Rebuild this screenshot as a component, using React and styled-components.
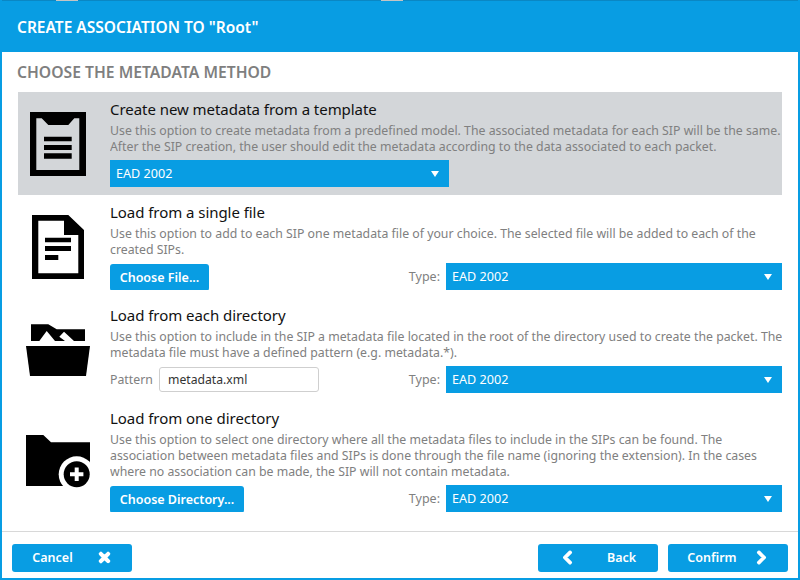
import React from 'react';
import styled, { createGlobalStyle } from 'styled-components';
import { FaChevronLeft, FaChevronRight, FaTimes } from 'react-icons/fa';

const BLUE = '#089de3';

const GlobalStyle = createGlobalStyle`
    html, body {
        margin: 0;
        padding: 0;
        background: #fff;
    }
    body {
        font-family: "Noto Sans", "Open Sans", sans-serif;
    }
`;

const Dialog = styled.div`
    width: 800px;
    height: 580px;
    box-sizing: border-box;
    display: flex;
    flex-direction: column;
    background: #fff;
    border-style: solid;
    border-color: ${BLUE};
    border-width: 0 2px 2px 2px;
    overflow: hidden;
`;

// what little of the window behind shows above the dialog
const TopEdge = styled.div`
    height: 1px;
    flex: none;
    margin: 0 -2px;
    background: linear-gradient(
        to right,
        #0a87c4 56px,
        #c4c4c4 56px,
        #c4c4c4 78px,
        #0a87c4 78px,
        #0a87c4 381px,
        #c4c4c4 381px,
        #c4c4c4 403px,
        #0a87c4 403px
    );
`;

const Header = styled.div`
    height: 51px;
    flex: none;
    box-sizing: border-box;
    margin: 0 -2px;
    padding: 1px 0 0 17px;
    display: flex;
    align-items: center;
    background: ${BLUE};
    color: #fff;
    font-size: 15.5px;
    font-weight: 600;
`;

const Heading = styled.div`
    height: 40px;
    padding-left: 15px;
    display: flex;
    align-items: center;
    color: #7f7f7f;
    font-size: 15.7px;
    font-weight: 600;
`;

const Methods = styled.div`
    margin: 0 16px;
`;

const Method = styled.div`
    display: flex;
    align-items: center;
    padding: 8px 0;
    background: ${props => (props.$active ? '#d3d6d9' : 'transparent')};
`;

const IconSlot = styled.div`
    width: 92px;
    flex: none;
    padding-left: 8px;
    box-sizing: border-box;
    display: flex;
`;

const Body = styled.div`
    flex: 1;
    min-width: 0;
    overflow: hidden;
`;

const Title = styled.div`
    height: 18px;
    line-height: 18px;
    margin-bottom: 5px;
    color: #111;
    font-size: 15px;
    letter-spacing: -0.05px;
    white-space: nowrap;
`;

const Description = styled.div`
    margin-bottom: 5px;
    color: #808080;
    font-size: 12.3px;
    line-height: 16px;
    white-space: nowrap;
`;

const Controls = styled.div`
    height: 27px;
    display: flex;
    align-items: center;
`;

const Select = styled.div`
    width: ${props => props.$width}px;
    height: 27px;
    flex: none;
    box-sizing: border-box;
    padding: 0 10px 0 6px;
    display: flex;
    align-items: center;
    justify-content: space-between;
    background: ${BLUE};
    color: #fff;
    font-size: 12.6px;

    &::after {
        content: '';
        border-style: solid;
        border-width: 6px 4.5px 0 4.5px;
        border-color: #fff transparent transparent transparent;
    }
`;

const Action = styled.button`
    height: 27px;
    margin-top: 2px;
    padding: 0 9.5px;
    min-width: ${props => props.$minWidth || 0}px;
    border: none;
    border-radius: 3px;
    background: ${BLUE};
    color: #fff;
    font-family: inherit;
    font-size: 12.5px;
    font-weight: 600;
`;

const PatternLabel = styled.span`
    width: 49px;
    color: #808080;
    font-size: 12.3px;
`;

const PatternInput = styled.input`
    width: 160px;
    height: 25px;
    box-sizing: border-box;
    padding: 0 8px;
    border: 1px solid #cfcfcf;
    border-radius: 3px;
    background: #fff;
    color: #333;
    font-family: inherit;
    font-size: 12.2px;
    outline: none;
`;

const TypeLabel = styled.span`
    margin-left: auto;
    margin-right: 6px;
    color: #808080;
    font-size: 12.5px;
`;

const Footer = styled.div`
    margin-top: auto;
    height: 47px;
    flex: none;
    box-sizing: border-box;
    padding: 12px 10px 6px 10px;
    display: flex;
    gap: 10px;
    border-top: 1px solid #d8d8d8;
`;

const FooterButton = styled.button`
    width: 120px;
    height: 28px;
    padding: 0 0 2px;
    border: none;
    border-radius: 3px;
    display: flex;
    align-items: center;
    justify-content: center;
    gap: ${props => props.$gap}px;
    background: ${BLUE};
    color: #fff;
    font-family: inherit;
    font-size: 12.5px;
    font-weight: 600;
    &:first-child {
        margin-right: auto;
    }
    svg {
        font-size: 15px;
        stroke: currentColor;
        stroke-width: 45;
    }
`;

const TemplateIcon = () => (
    <svg width="64" height="64" viewBox="0 0 64 64">
        <path
            fillRule="evenodd"
            d="M4 0H60V64H4ZM10.3 6.3V58H53.3V6.3H48.3L42.3 13H22.3L15.7 6.3Z"
        />
        <path d="M18 24.7H45.7V29.3H18ZM18 33H45.7V38H18ZM18 41.3H45.7V46.7H18Z" />
    </svg>
);

const FileIcon = () => (
    <svg width="64" height="64" viewBox="0 0 64 64">
        <path
            fillRule="evenodd"
            d="M6 0H42.3L58 15V64H6ZM12.3 5.7V58.3H52.3V20H38V5.7Z"
        />
        <path d="M19 22.7H45V27.3H19ZM19 31H45V36H19ZM19 40H32.3V45H19Z" />
    </svg>
);

const OpenFolderIcon = () => (
    <svg width="64" height="64" viewBox="0 0 64 64">
        <path d="M5 6.3H22.3L30.7 11.3H59V23H48L38 13.7L33.3 18.7L39 23H29L20.7 13L13.3 23H5Z" />
        <path d="M0 28H64L60 58H4Z" />
    </svg>
);

const AddFolderIcon = () => (
    <svg width="64" height="64" viewBox="0 0 64 64">
        <path d="M0 6H17.3L25 13.3H64V57H0Z" />
        <circle cx="50.7" cy="45.3" r="18" fill="#fff" />
        <circle cx="50.7" cy="45.3" r="13" />
        <path fill="#fff" d="M48.7 38.6H52.7V43.3H57.4V47.3H52.7V52H48.7V47.3H44V43.3H48.7Z" />
    </svg>
);

const App = () => (
    <Dialog>
        <GlobalStyle />
        <TopEdge />
        <Header>CREATE ASSOCIATION TO "Root"</Header>
        <Heading>CHOOSE THE METADATA METHOD</Heading>
        <Methods>
            <Method $active>
                <IconSlot><TemplateIcon /></IconSlot>
                <Body>
                    <Title>Create new metadata from a template</Title>
                    <Description>
                        Use this option to create metadata from a predefined model. The associated metadata for each SIP will be the same.<br />
                        After the SIP creation, the user should edit the metadata according to the data associated to each packet.
                    </Description>
                    <Controls><Select $width={339}>EAD 2002</Select></Controls>
                </Body>
            </Method>
            <Method>
                <IconSlot><FileIcon /></IconSlot>
                <Body>
                    <Title>Load from a single file</Title>
                    <Description>
                        Use this option to add to each SIP one metadata file of your choice. The selected file will be added to each of the<br />
                        created SIPs.
                    </Description>
                    <Controls>
                        <Action $minWidth={99}>Choose File...</Action>
                        <TypeLabel>Type:</TypeLabel>
                        <Select $width={336}>EAD 2002</Select>
                    </Controls>
                </Body>
            </Method>
            <Method>
                <IconSlot><OpenFolderIcon /></IconSlot>
                <Body>
                    <Title>Load from each directory</Title>
                    <Description>
                        Use this option to include in the SIP a metadata file located in the root of the directory used to create the packet. The<br />
                        metadata file must have a defined pattern (e.g. metadata.*).
                    </Description>
                    <Controls>
                        <PatternLabel>Pattern</PatternLabel>
                        <PatternInput defaultValue="metadata.xml" />
                        <TypeLabel>Type:</TypeLabel>
                        <Select $width={336}>EAD 2002</Select>
                    </Controls>
                </Body>
            </Method>
            <Method>
                <IconSlot><AddFolderIcon /></IconSlot>
                <Body>
                    <Title>Load from one directory</Title>
                    <Description>
                        Use this option to select one directory where all the metadata files to include in the SIPs can be found. The<br />
                        association between metadata files and SIPs is done through the file name (ignoring the extension). In the cases<br />
                        where no association can be made, the SIP will not contain metadata.
                    </Description>
                    <Controls>
                        <Action $minWidth={134}>Choose Directory...</Action>
                        <TypeLabel>Type:</TypeLabel>
                        <Select $width={336}>EAD 2002</Select>
                    </Controls>
                </Body>
            </Method>
        </Methods>
        <Footer>
            <FooterButton $gap={24}>Cancel <FaTimes /></FooterButton>
            <FooterButton $gap={32}><FaChevronLeft /> Back</FooterButton>
            <FooterButton $gap={17}>Confirm <FaChevronRight /></FooterButton>
        </Footer>
    </Dialog>
);

export default App;
